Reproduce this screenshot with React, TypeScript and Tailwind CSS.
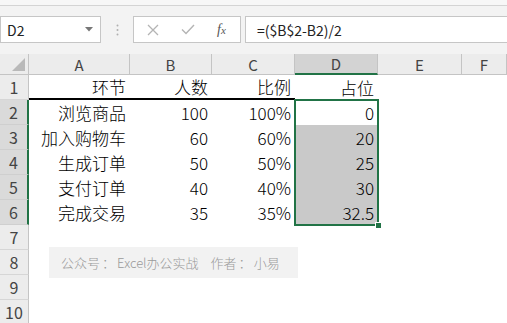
import React from "react";

const font = "font-['Noto_Sans_CJK_SC','Noto_Sans',sans-serif]";

const data: [string, string, string, string][] = [
  ["环节", "人数", "比例", "占位"],
  ["浏览商品", "100", "100%", "0"],
  ["加入购物车", "60", "60%", "20"],
  ["生成订单", "50", "50%", "25"],
  ["支付订单", "40", "40%", "30"],
  ["完成交易", "35", "35%", "32.5"],
  ["", "", "", ""],
  ["", "", "", ""],
  ["", "", "", ""],
  ["", "", "", ""],
];

const cols = ["A", "B", "C", "D", "E", "F"];

export default function App() {
  return (
    <div className={`w-[507px] h-[323px] overflow-hidden bg-white ${font}`}>
      {/* ribbon remnant */}
      <div className="h-[6px] bg-[#f7f7f7] border-b border-[#d4d4d4]" />
      {/* formula bar */}
      <div className="h-[48px] bg-[#f3f3f3] pt-[10px] flex items-start">
        <div className="w-[101px] h-[27px] bg-white border border-[#c6c6c6] flex items-center justify-between pl-[6px] pr-[7px]">
          <span className="text-[14px] text-[#222] leading-none">D2</span>
          <svg width="8" height="5" viewBox="0 0 8 5">
            <path d="M0 0 L8 0 L4 4.5 Z" fill="#777" />
          </svg>
        </div>
        <div className="w-[32px] h-[27px] flex items-center justify-center">
          <svg width="3" height="12" viewBox="0 0 3 12">
            <circle cx="1.5" cy="1.5" r="1" fill="#b0b0b0" />
            <circle cx="1.5" cy="6" r="1" fill="#b0b0b0" />
            <circle cx="1.5" cy="10.5" r="1" fill="#b0b0b0" />
          </svg>
        </div>
        <div className="w-[108px] h-[27px] bg-white border border-[#c6c6c6] flex items-center pl-[13px] gap-[22px]">
          <svg width="12" height="12" viewBox="0 0 12 12">
            <path d="M1 1 L11 11 M11 1 L1 11" stroke="#b4b4b4" strokeWidth="1.3" />
          </svg>
          <svg width="14" height="11" viewBox="0 0 14 11">
            <path d="M1 5.5 L5 9.5 L13 1" stroke="#b4b4b4" strokeWidth="1.4" fill="none" />
          </svg>
          <span className="font-['Liberation_Serif',serif] italic text-[14px] text-[#555] leading-none">
            f<span className="text-[11px]">x</span>
          </span>
        </div>
        <div className="ml-[4px] flex-1 h-[27px] bg-white border border-[#c6c6c6] border-r-0 flex items-center pl-[11px]">
          <span className="text-[14px] text-[#222] leading-none">=($B$2-B2)/2</span>
        </div>
      </div>
      {/* sheet */}
      <div className="relative">
        <div className="grid grid-cols-[29px_101px_82px_83px_83px_84px_1fr] grid-rows-[21px_repeat(10,25px)]">
          {/* corner */}
          <div className="bg-[#ececec] border-b border-r border-[#c4c4c4] relative">
            <svg className="absolute right-[3px] bottom-[3px]" width="13" height="13" viewBox="0 0 13 13">
              <path d="M13 0 L13 13 L0 13 Z" fill="#b9b9b9" />
            </svg>
          </div>
          {cols.map((c) =>
            c === "D" ? (
              <div
                key={c}
                className="bg-[#d3d3d3] border-b-2 border-b-[#217346] border-r border-r-[#c4c4c4] flex items-center justify-center text-[15px] text-[#444] leading-none"
              >
                {c}
              </div>
            ) : (
              <div
                key={c}
                className="bg-[#ececec] border-b border-r border-[#c4c4c4] flex items-center justify-center text-[15px] text-[#444] leading-none"
              >
                {c}
              </div>
            )
          )}
          {data.map((row, i) => {
            const sel = i >= 1 && i <= 5;
            return (
              <React.Fragment key={i}>
                <div
                  className={
                    sel
                      ? "bg-[#dadada] border-b border-b-[#cfcfcf] border-r-2 border-r-[#217346] flex items-center justify-center text-[16px] text-[#444] leading-none"
                      : "bg-[#ececec] border-b border-b-[#d6d6d6] border-r border-r-[#c4c4c4] flex items-center justify-center text-[16px] text-[#444] leading-none"
                  }
                >
                  {i + 1}
                </div>
                {row.map((v, j) => {
                  let cls = "flex items-center justify-end pr-[4px] text-[17px] font-light text-black leading-none";
                  if (i === 0 && j < 3) cls += " border-b-2 border-black";
                  if (j === 3 && i >= 2 && i <= 5) cls += " bg-[#c9c9c9]";
                  return (
                    <div key={j} className={cls}>
                      {v}
                    </div>
                  );
                })}
                <div />
                <div />
              </React.Fragment>
            );
          })}
        </div>
        {/* selection border */}
        <div className="absolute left-[294px] top-[45px] w-[85px] h-[127px] border-2 border-[#217346]" />
        {/* fill handle */}
        <div className="absolute left-[375px] top-[168px] w-[7px] h-[7px] bg-[#217346] border border-white" />
        {/* watermark shape */}
        <div className="absolute left-[49px] top-[193px] w-[249px] h-[31px] bg-[#f2f2f2] flex items-center pl-[12px]">
          <span className="text-[13px] font-light text-[#9a9a9a] leading-none whitespace-nowrap flex items-center">
            <span>公众号</span>
            <span className="mx-[2px]">：</span>
            <span>Excel办公实战</span>
            <span className="ml-[12px]">作者</span>
            <span className="mx-[2px]">：</span>
            <span>小易</span>
          </span>
        </div>
      </div>
    </div>
  );
}
